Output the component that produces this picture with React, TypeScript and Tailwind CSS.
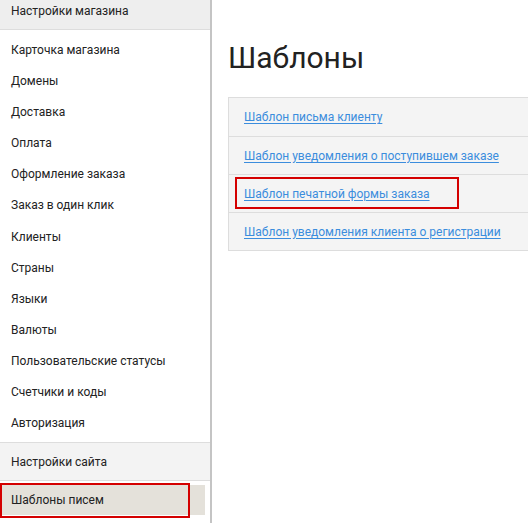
const shopItems = [
  'Карточка магазина',
  'Домены',
  'Доставка',
  'Оплата',
  'Оформление заказа',
  'Заказ в один клик',
  'Клиенты',
  'Страны',
  'Языки',
  'Валюты',
  'Пользовательские статусы',
  'Счетчики и коды',
  'Авторизация',
];

const templates = [
  'Шаблон письма клиенту',
  'Шаблон уведомления о поступившем заказе',
  'Шаблон печатной формы заказа',
  'Шаблон уведомления клиента о регистрации',
];

export default function App() {
  return (
    <div className="flex h-[523px] w-[528px] overflow-hidden bg-white font-['Roboto',sans-serif] text-[12px] text-[#222]">
      {/* settings sidebar */}
      <aside className="flex w-[212px] shrink-0 flex-col border-r-2 border-[#c4c4c4]">
        <div className="flex h-[30px] items-end border-b border-[#dddddd] bg-[#eeeeee] pb-[10px] pl-[11px] leading-4">
          Настройки магазина
        </div>
        <ul className="pb-[3px] pt-[4px]">
          {shopItems.map((item) => (
            <li key={item} className="flex h-[31.17px] items-center pl-[11px]">
              {item}
            </li>
          ))}
        </ul>
        <div className="flex h-[39px] items-center border-y border-[#dddddd] bg-[#f3f3f3] pl-[11px]">
          Настройки сайта
        </div>
        <div className="relative mt-[4px] mr-[5px] flex h-[30px] items-center bg-[#e4e1da] pl-[11px]">
          Шаблоны писем
          <span className="pointer-events-none absolute -bottom-[3px] -top-[2px] left-0 w-[190px] border-2 border-[#d40000]" />
        </div>
      </aside>

      {/* templates list */}
      <main className="flex-1 pl-[16px] pt-[40px]">
        <h1 className="text-[30px] leading-9 text-[#222]">Шаблоны</h1>
        <div className="mt-[21px] w-[400px] border border-[#dddddd] bg-[#f4f4f4]">
          {templates.map((t, i) => (
            <div key={t} className={`relative flex h-[38px] items-center pl-[15px] ${i > 0 ? 'border-t border-[#dddddd]' : ''}`}>
              <a href="#" className="text-[#3b8ddd] underline underline-offset-2">
                {t}
              </a>
              {i === 2 && <span className="pointer-events-none absolute left-[6px] top-[2px] h-[32px] w-[224px] border-2 border-[#d40000]" />}
            </div>
          ))}
        </div>
      </main>
    </div>
  );
}
